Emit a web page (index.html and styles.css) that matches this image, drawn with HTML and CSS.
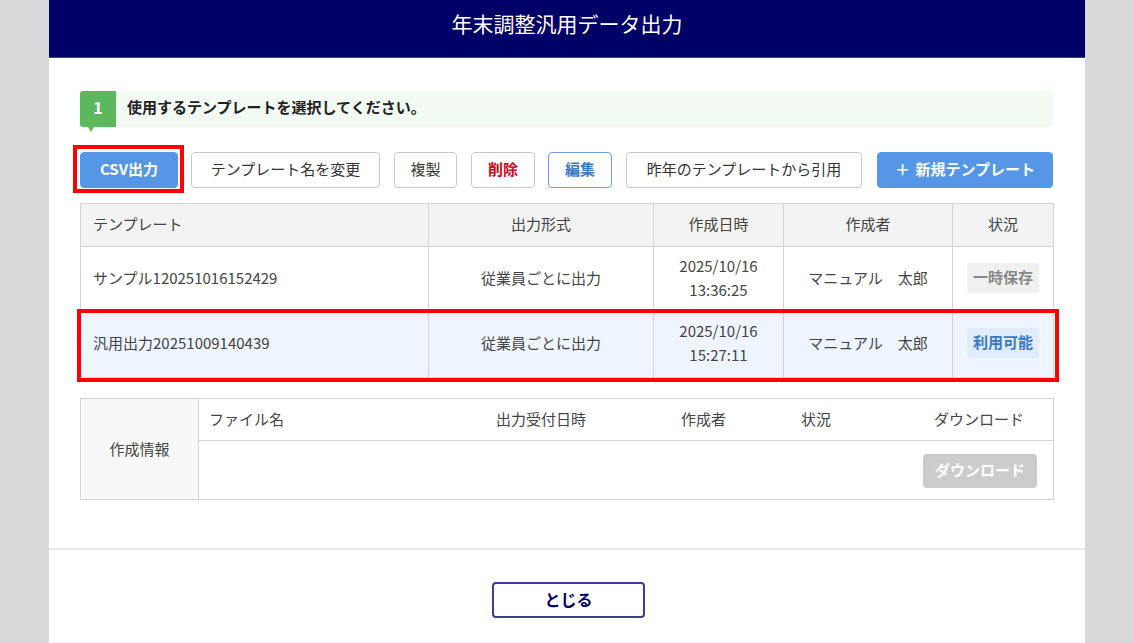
FILE: index.html
```html
<!DOCTYPE html>
<html lang="ja">
<head>
<meta charset="utf-8">
<link rel="stylesheet" href="styles.css">
</head>
<body>
<div class="modal">
  <div class="modal-header">年末調整汎用データ出力</div>
  <div class="modal-body">
    <div class="step">
      <div class="step-num">1</div>
      <div class="step-text">使用するテンプレートを選択してください。</div>
    </div>
    <div class="toolbar">
      <button class="btn btn-primary btn-csv">CSV出力</button>
      <button class="btn">テンプレート名を変更</button>
      <button class="btn">複製</button>
      <button class="btn btn-danger">削除</button>
      <button class="btn btn-edit">編集</button>
      <button class="btn">昨年のテンプレートから引用</button>
      <button class="btn btn-primary btn-new">＋ 新規テンプレート</button>
    </div>
    <div class="tpl-wrap">
      <table class="tpl">
        <colgroup>
          <col class="c1"><col class="c2"><col class="c3"><col class="c4"><col class="c5">
        </colgroup>
        <thead>
          <tr><th class="left">テンプレート</th><th>出力形式</th><th>作成日時</th><th>作成者</th><th>状況</th></tr>
        </thead>
        <tbody>
          <tr>
            <td class="left">サンプル120251016152429</td>
            <td>従業員ごとに出力</td>
            <td>2025/10/16<br>13:36:25</td>
            <td>マニュアル　太郎</td>
            <td><span class="badge badge-gray">一時保存</span></td>
          </tr>
          <tr class="selected">
            <td class="left">汎用出力20251009140439</td>
            <td>従業員ごとに出力</td>
            <td>2025/10/16<br>15:27:11</td>
            <td>マニュアル　太郎</td>
            <td><span class="badge badge-blue">利用可能</span></td>
          </tr>
        </tbody>
      </table>
      <div class="row-highlight"></div>
    </div>
    <table class="info">
      <colgroup>
        <col class="i0"><col class="i1"><col class="i2"><col class="i3"><col class="i4"><col class="i5">
      </colgroup>
      <tr class="info-head">
        <th class="info-label" rowspan="2">作成情報</th>
        <td class="left">ファイル名</td>
        <td>出力受付日時</td>
        <td>作成者</td>
        <td>状況</td>
        <td class="right">ダウンロード</td>
      </tr>
      <tr class="info-body">
        <td></td><td></td><td></td><td></td>
        <td class="right dl-cell"><button class="btn-dl">ダウンロード</button></td>
      </tr>
    </table>
  </div>
  <div class="modal-footer">
    <button class="btn-close">とじる</button>
  </div>
</div>
</body>
</html>
```
FILE: styles.css
```css
* { box-sizing: border-box; }
html, body { margin: 0; padding: 0; }
body {
  background: #d9d9d9;
  font-family: "Noto Sans CJK JP", "Noto Sans", sans-serif;
  color: #333;
  height: 643px;
  overflow: hidden;
}
.modal {
  width: 1036px;
  margin-left: 49px;
  background: #fff;
  height: 643px;
}
.modal-header {
  height: 58px;
  background: #000066;
  border-bottom: 1px solid #3d3d99;
  color: #fff;
  font-size: 21px;
  text-align: center;
  line-height: 46px;
}
.modal-body {
  padding: 33px 32px 48px 31px;
  border-bottom: 2px solid #e8e8e8;
}
.step {
  display: flex;
  align-items: center;
  height: 36px;
  background: #f3f9f3;
  border-radius: 4px;
}
.step-num {
  position: relative;
  width: 36px;
  height: 36px;
  background: #5cb85c;
  color: #fff;
  font-weight: bold;
  font-size: 16px;
  text-align: center;
  line-height: 33px;
  border-radius: 3px 0 0 3px;
}
.step-num::after {
  content: "";
  position: absolute;
  left: 8px;
  bottom: -5px;
  border-left: 3px solid transparent;
  border-right: 3px solid transparent;
  border-top: 5px solid #5cb85c;
}
.step-text {
  margin-left: 11px;
  font-size: 15px;
  font-weight: bold;
  color: #222;
  padding-bottom: 5px;
}
.toolbar {
  display: flex;
  margin-top: 25px;
  height: 36px;
}
.btn {
  height: 36px;
  padding: 0 0 3px;
  border: 1px solid #c8c8c8;
  border-radius: 4px;
  background: #fff;
  font-family: inherit;
  font-size: 15px;
  color: #333;
  margin-right: 14px;
}
.btn-primary {
  background: #5596e6;
  border-color: #5596e6;
  color: #fff;
  font-weight: bold;
}
.btn-csv {
  position: relative;
  width: 98px;
  margin-right: 13px;
}
.btn-csv::after {
  content: "";
  position: absolute;
  left: -8px;
  top: -8px;
  right: -7px;
  bottom: -6px;
  border: 4px solid #ff0000;
}
.btn-danger { color: #d0021b; font-weight: bold; }
.btn-edit { color: #3a78c9; border-color: #6a9de0; font-weight: bold; }
.btn-new { margin-right: 0; margin-left: 1px; width: 176px; word-spacing: 2px; }
.toolbar .btn:nth-child(2) { width: 189px; }
.toolbar .btn:nth-child(3) { width: 63px; }
.toolbar .btn:nth-child(4) { width: 64px; margin-right: 13px; }
.toolbar .btn:nth-child(5) { width: 64px; }
.toolbar .btn:nth-child(6) { width: 236px; }

.tpl-wrap {
  position: relative;
  margin-top: 15px;
}
table { border-collapse: collapse; }
.tpl {
  width: 973px;
  table-layout: fixed;
  font-size: 15px;
}
.tpl .c1 { width: 348px; }
.tpl .c2 { width: 225px; }
.tpl .c3 { width: 130px; }
.tpl .c4 { width: 169px; }
.tpl .c5 { width: 101px; }
.tpl th, .tpl td {
  border: 1px solid #d4d4d4;
  text-align: center;
  font-weight: normal;
  color: #444;
  padding-top: 0;
  padding-bottom: 3px;
}
.tpl th {
  background: #f3f3f3;
  height: 43px;
}
.tpl td { height: 65px; line-height: 24px; }
.tpl .selected td { height: 66px; background: #eef5fe; }
.tpl .left { text-align: left; padding-left: 12px; }
.badge {
  display: inline-block;
  padding: 0 6px;
  height: 30px;
  line-height: 28px;
  border-radius: 3px;
  font-weight: bold;
  font-size: 15px;
}
.badge-gray { background: #f0f0f0; color: #888; }
.badge-blue { background: #e1ecfa; color: #3a78c9; }
.row-highlight {
  position: absolute;
  left: -3px;
  top: 106px;
  width: 982px;
  height: 73px;
  border: 4px solid #ff0000;
  pointer-events: none;
}
.info {
  margin-top: 20px;
  width: 973px;
  table-layout: fixed;
  font-size: 15px;
  border: 1px solid #d4d4d4;
}
.info .i0 { width: 118px; }
.info .i1 { width: 240px; }
.info .i2 { width: 205px; }
.info .i3 { width: 120px; }
.info .i4 { width: 105px; }
.info .i5 { width: 185px; }
.info-label {
  background: #f8f8f8;
  border: 1px solid #d4d4d4;
  font-weight: normal;
  color: #444;
  padding-bottom: 3px;
}
.info td { color: #444; text-align: center; padding-bottom: 3px; }
.info-head td { height: 42px; border-bottom: 1px solid #d4d4d4; }
.info-body td { height: 59px; }
.info .left { text-align: left; padding-left: 10px; }
.info .right { text-align: right; padding-right: 29px; }
.info .dl-cell { padding-right: 16px; padding-bottom: 0; }
.btn-dl {
  width: 114px;
  height: 34px;
  background: #cccccc;
  border: none;
  border-radius: 4px;
  color: #fff;
  font-family: inherit;
  font-size: 15px;
  font-weight: bold;
  padding-bottom: 3px;
}
.modal-footer {
  display: flex;
  justify-content: center;
  padding-top: 32px;
  padding-left: 3px;
}
.btn-close {
  width: 153px;
  height: 36px;
  border: 2px solid #3d3d8f;
  border-radius: 4px;
  background: #fff;
  color: #000066;
  font-family: inherit;
  font-size: 16px;
  font-weight: bold;
  padding-bottom: 3px;
}
```
